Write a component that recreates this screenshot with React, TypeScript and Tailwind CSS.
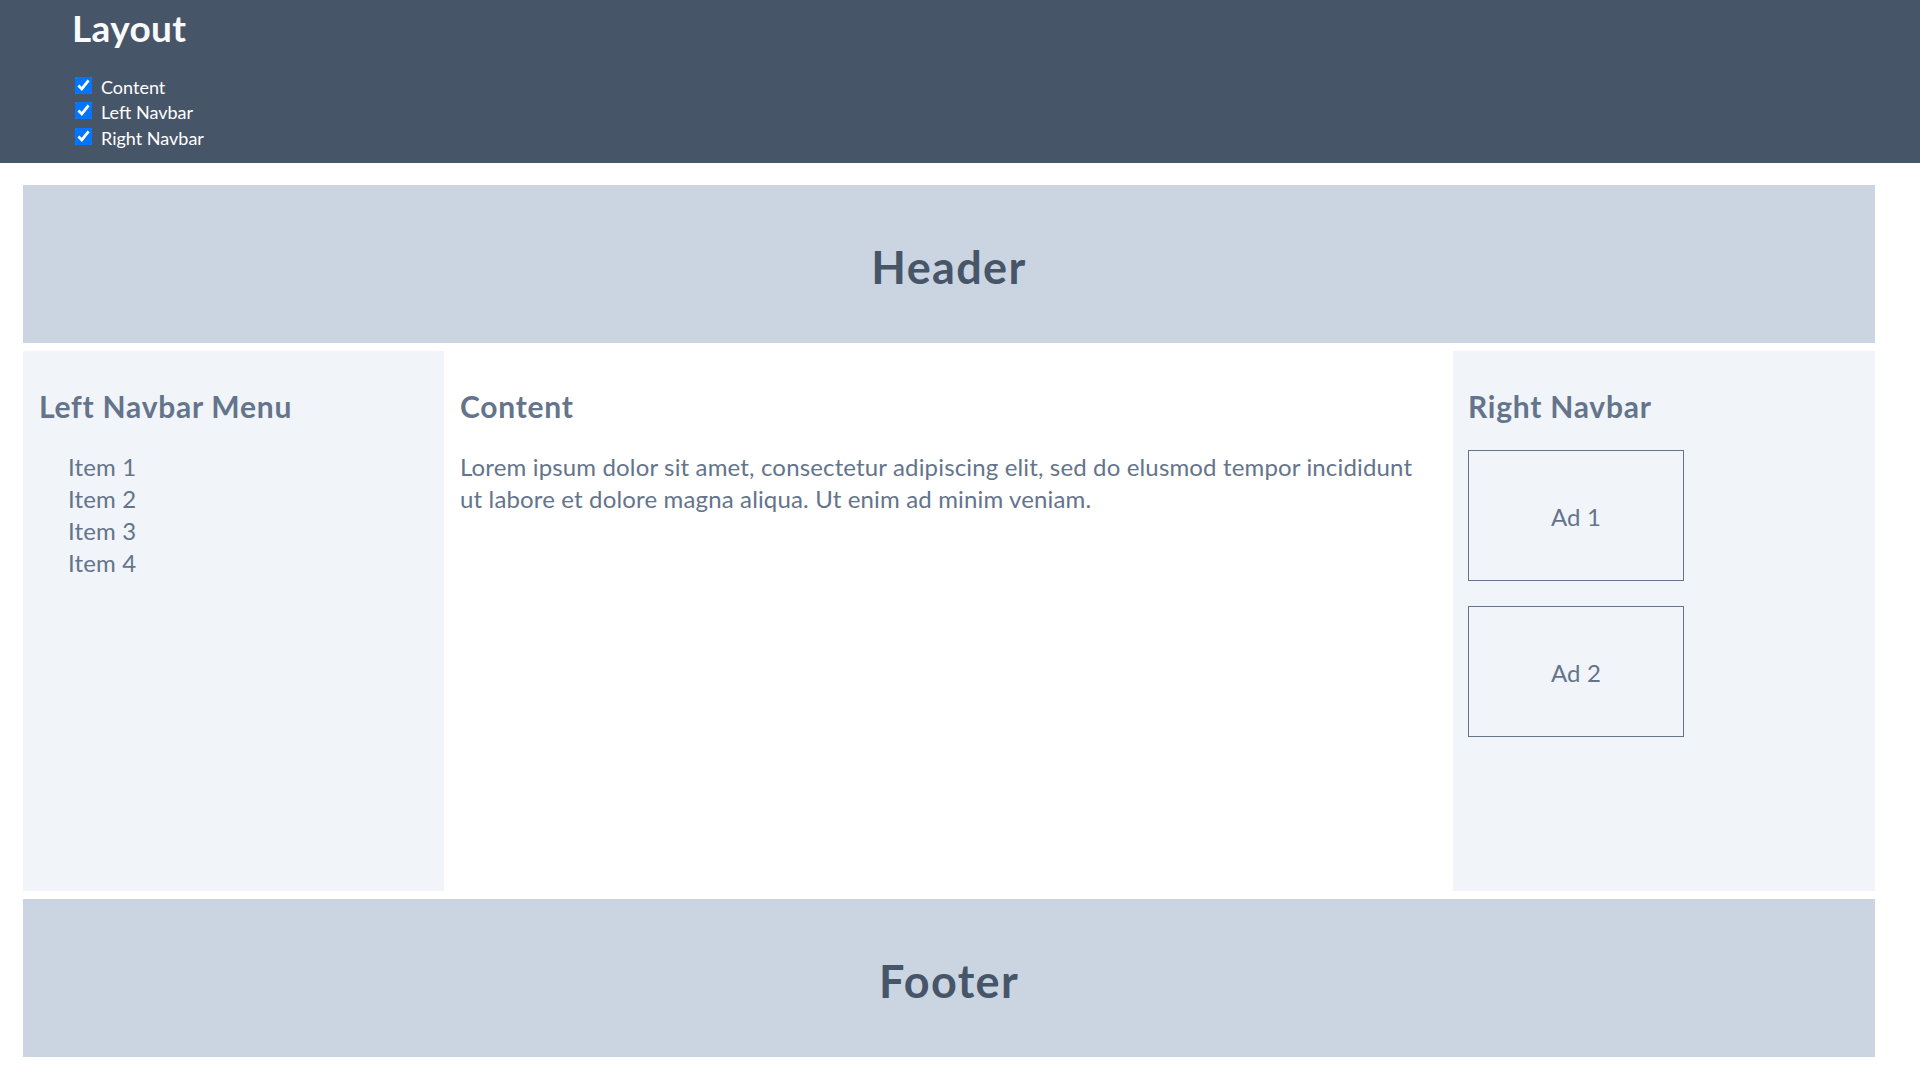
export default function App() {
  const toggles = ["Content", "Left Navbar", "Right Navbar"];
  const items = ["Item 1", "Item 2", "Item 3", "Item 4"];
  return (
    <div className="font-['Lato',sans-serif] bg-white pb-[60px]">
      <div className="bg-[#475569] h-[163px] pl-[72px] pt-[6px]">
        <h1 className="text-[37px] leading-[44px] font-bold tracking-[0.01em] text-[#f8fafc]">Layout</h1>
        <div className="mt-[24px] flex flex-col pl-[3px]">
          {toggles.map((l) => (
            <label key={l} className="flex items-center h-[25.5px] text-[18px] text-white gap-[9px]">
              <input type="checkbox" defaultChecked className="m-0 mb-[3px] w-[17px] h-[17px] accent-[#0075ff]" />
              <span className="mt-[1px]">{l}</span>
            </label>
          ))}
        </div>
      </div>
      <div className="ml-[23px] w-[1852px] pt-[22px] flex flex-col gap-[8px]">
        <header className="h-[158px] bg-[#cbd5e1] flex items-center justify-center pt-[5px]">
          <h2 className="text-[45px] leading-[56px] font-bold tracking-[0.03em] text-[#475569]">Header</h2>
        </header>
        <div className="h-[540px] flex">
          <nav className="w-[421px] bg-[#f1f5f9] pt-[35px] px-[16px]">
            <h3 className="text-[30px] leading-[40px] font-bold tracking-[0.025em] text-[#64748b]">Left Navbar Menu</h3>
            <ul className="mt-[25px] pl-[29px] text-[24px] leading-[32px] tracking-[0.15px] text-[#64748b]">
              {items.map((i) => (
                <li key={i}>{i}</li>
              ))}
            </ul>
          </nav>
          <main className="flex-1 bg-white pt-[35px] px-[16px]">
            <h3 className="text-[30px] leading-[40px] font-bold tracking-[0.025em] text-[#64748b]">Content</h3>
            <p className="mt-[25px] text-[24px] leading-[32px] tracking-[0.15px] text-[#64748b]">
              Lorem ipsum dolor sit amet, consectetur adipiscing elit, sed do elusmod tempor incididunt ut labore et dolore magna aliqua. Ut enim ad minim veniam.
            </p>
          </main>
          <aside className="w-[422px] bg-[#f1f5f9] pt-[35px] px-[15px]">
            <h3 className="text-[30px] leading-[40px] font-bold tracking-[0.025em] text-[#64748b]">Right Navbar</h3>
            <div className="mt-[24px] flex flex-col gap-[25px]">
              {["Ad 1", "Ad 2"].map((a) => (
                <div key={a} className="w-[216px] h-[131px] border border-[#64748b] flex items-center justify-center pt-[2px] text-[24px] tracking-[0.15px] text-[#64748b]">
                  {a}
                </div>
              ))}
            </div>
          </aside>
        </div>
        <footer className="h-[158px] bg-[#cbd5e1] flex items-center justify-center pt-[5px]">
          <h2 className="text-[45px] leading-[56px] font-bold tracking-[0.03em] text-[#475569]">Footer</h2>
        </footer>
      </div>
    </div>
  );
}
